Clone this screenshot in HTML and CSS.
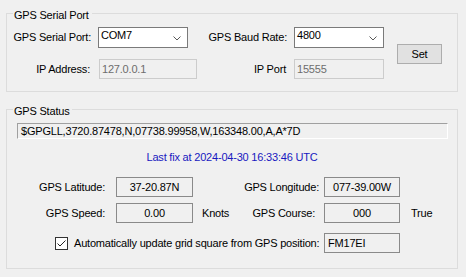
FILE: index.html
```html
<!DOCTYPE html>
<html>
<head>
<meta charset="utf-8">
<title>GPS</title>
<link rel="stylesheet" href="styles.css">
</head>
<body>
<div class="window">
  <fieldset class="group serial">
    <legend>GPS Serial Port</legend>
    <div class="serial-body">
      <div class="serial-rows">
        <div class="row row1">
          <span class="lbl l-port">GPS Serial Port:</span>
          <div class="combo">
            <span class="combo-text">COM7</span>
            <svg class="chev" width="8" height="5" viewBox="0 0 8 5"><polyline points="0.5,0.5 4,4 7.5,0.5" fill="none" stroke="#5a5a5a" stroke-width="1"/></svg>
          </div>
          <span class="lbl l-baud">GPS Baud Rate:</span>
          <div class="combo combo-baud">
            <span class="combo-text">4800</span>
            <svg class="chev" width="8" height="5" viewBox="0 0 8 5"><polyline points="0.5,0.5 4,4 7.5,0.5" fill="none" stroke="#5a5a5a" stroke-width="1"/></svg>
          </div>
        </div>
        <div class="row row2">
          <span class="lbl l-ip">IP Address:</span>
          <div class="textbox disabled t-ip">127.0.0.1</div>
          <span class="lbl l-ipport">IP Port</span>
          <div class="textbox disabled t-ipport">15555</div>
        </div>
      </div>
      <button class="btn" type="button">Set</button>
    </div>
  </fieldset>

  <fieldset class="group status">
    <legend>GPS Status</legend>
    <div class="nmea">$GPGLL,3720.87478,N,07738.99958,W,163348.00,A,A*7D</div>
    <div class="lastfix">Last fix at 2024-04-30 16:33:46 UTC</div>
    <div class="values">
      <span class="lbl v-lbl">GPS Latitude:</span>
      <div class="vbox">37-20.87N</div>
      <div class="mid"><span></span><span class="lbl">GPS Longitude:</span></div>
      <div class="vbox vbox2">077-39.00W</div>
      <span></span>

      <span class="lbl v-lbl">GPS Speed:</span>
      <div class="vbox">0.00</div>
      <div class="mid mid2"><span>Knots</span><span class="lbl">GPS Course:</span></div>
      <div class="vbox vbox2">000</div>
      <span class="unit">True</span>

      <div class="check-cell">
        <span class="checkbox"><svg width="11" height="11" viewBox="0 0 11 11"><polyline points="1.5,5.5 4,8 9.5,2.5" fill="none" stroke="#222" stroke-width="1"/></svg></span>
        <span class="check-text">Automatically update grid square from GPS position:</span>
      </div>
      <div class="vbox vbox2 grid">FM17EI</div>
      <span></span>
    </div>
  </fieldset>
</div>
</body>
</html>
```

FILE: styles.css
```css
* {
  box-sizing: border-box;
}

html, body {
  margin: 0;
  padding: 0;
}

body {
  background: #f0f0f0;
  font-family: "Liberation Sans", Arial, sans-serif;
  font-size: 11px;
  line-height: 13px;
  letter-spacing: -0.2px;
  color: #000;
  width: 466px;
  height: 277px;
  overflow: hidden;
}

.window {
  padding: 6px 0 0 6px;
}

.group {
  margin: 0;
  padding: 0;
  width: 452px;
  min-width: 0;
  border: 1px solid #dcdcdc;
}

.group legend {
  margin-left: 6px;
  padding: 3px 3px 0 1px;
  line-height: 12px;
  font-size: 11px;
}

/* ---------- Serial port group ---------- */
.serial {
  padding: 6px 0 12px 0;
}

.serial-body {
  display: flex;
  align-items: flex-start;
}

.serial-rows {
  display: flex;
  flex-direction: column;
  gap: 11px;
}

.row {
  display: flex;
  align-items: center;
}

.lbl {
  text-align: right;
  white-space: nowrap;
}

.l-port { width: 87px; padding-right: 3px; }
.l-baud { width: 103px; padding-right: 4px; }
.l-ip { width: 88px; padding-right: 5px; }
.l-ipport { width: 93px; padding-right: 4px; }

.combo {
  display: flex;
  justify-content: space-between;
  align-items: flex-start;
  width: 90px;
  height: 21px;
  margin-left: 4px;
  background: #fff;
  border: 1px solid #7a7a7a;
  padding: 1px 6px 0 2px;
}

.combo-baud {
  margin-left: 3px;
}

.chev {
  display: block;
  margin-top: 7px;
}

.textbox {
  height: 20px;
  margin-left: 4px;
  padding: 0 0 0 2px;
  line-height: 18px;
  border: 1px solid #cccccc;
  background: #f0f0f0;
}

.textbox.disabled {
  color: #6d6d6d;
}

.t-ip { width: 98px; }
.t-ipport { width: 90px; }

.btn {
  margin: 17px 0 0 13px;
  width: 45px;
  height: 20px;
  padding: 0;
  font-family: inherit;
  font-size: 11px;
  letter-spacing: -0.2px;
  color: #000;
  background: #e1e1e1;
  border: 1px solid #adadad;
  border-radius: 0;
}

/* ---------- Status group ---------- */
.status {
  margin-top: 10px;
  padding: 6px 0 15px 0;
}

.nmea {
  margin-left: 10px;
  width: 431px;
  height: 16px;
  padding-left: 3px;
  line-height: 14px;
  border-top: 1px solid #a0a0a0;
  border-left: 1px solid #a0a0a0;
  border-bottom: 1px solid #ffffff;
  border-right: 1px solid #ffffff;
  white-space: nowrap;
  overflow: hidden;
}

.lastfix {
  margin-top: 12px;
  text-align: center;
  color: #1818c0;
}

.values {
  margin-top: 13px;
  display: grid;
  grid-template-columns: 98px 88px 126px 81px 1fr;
  grid-auto-rows: auto;
  row-gap: 6px;
  align-items: center;
}

.v-lbl {
  display: block;
}

.vbox {
  width: 77px;
  height: 20px;
  margin-left: 11px;
  line-height: 18px;
  text-align: center;
  border: 1px solid #8a8a8a;
  background: #f0f0f0;
}

.vbox2 {
  width: 76px;
  margin-left: 5px;
}

.mid {
  display: flex;
  justify-content: space-between;
}

.mid2 {
  padding-left: 9px;
  padding-right: 4px;
}

.unit {
  margin-left: 11px;
}

.check-cell {
  grid-column: 1 / 4;
  display: flex;
  align-items: center;
  gap: 6px;
  padding-left: 48px;
  margin-top: 4px;
}

.checkbox {
  width: 13px;
  height: 13px;
  border: 1px solid #333;
  background: #fff;
  display: flex;
  align-items: center;
  justify-content: center;
}

.checkbox svg {
  display: block;
}

.check-text {
  white-space: nowrap;
}

.grid {
  text-align: left;
  padding-left: 3px;
  margin-top: 4px;
}
```
